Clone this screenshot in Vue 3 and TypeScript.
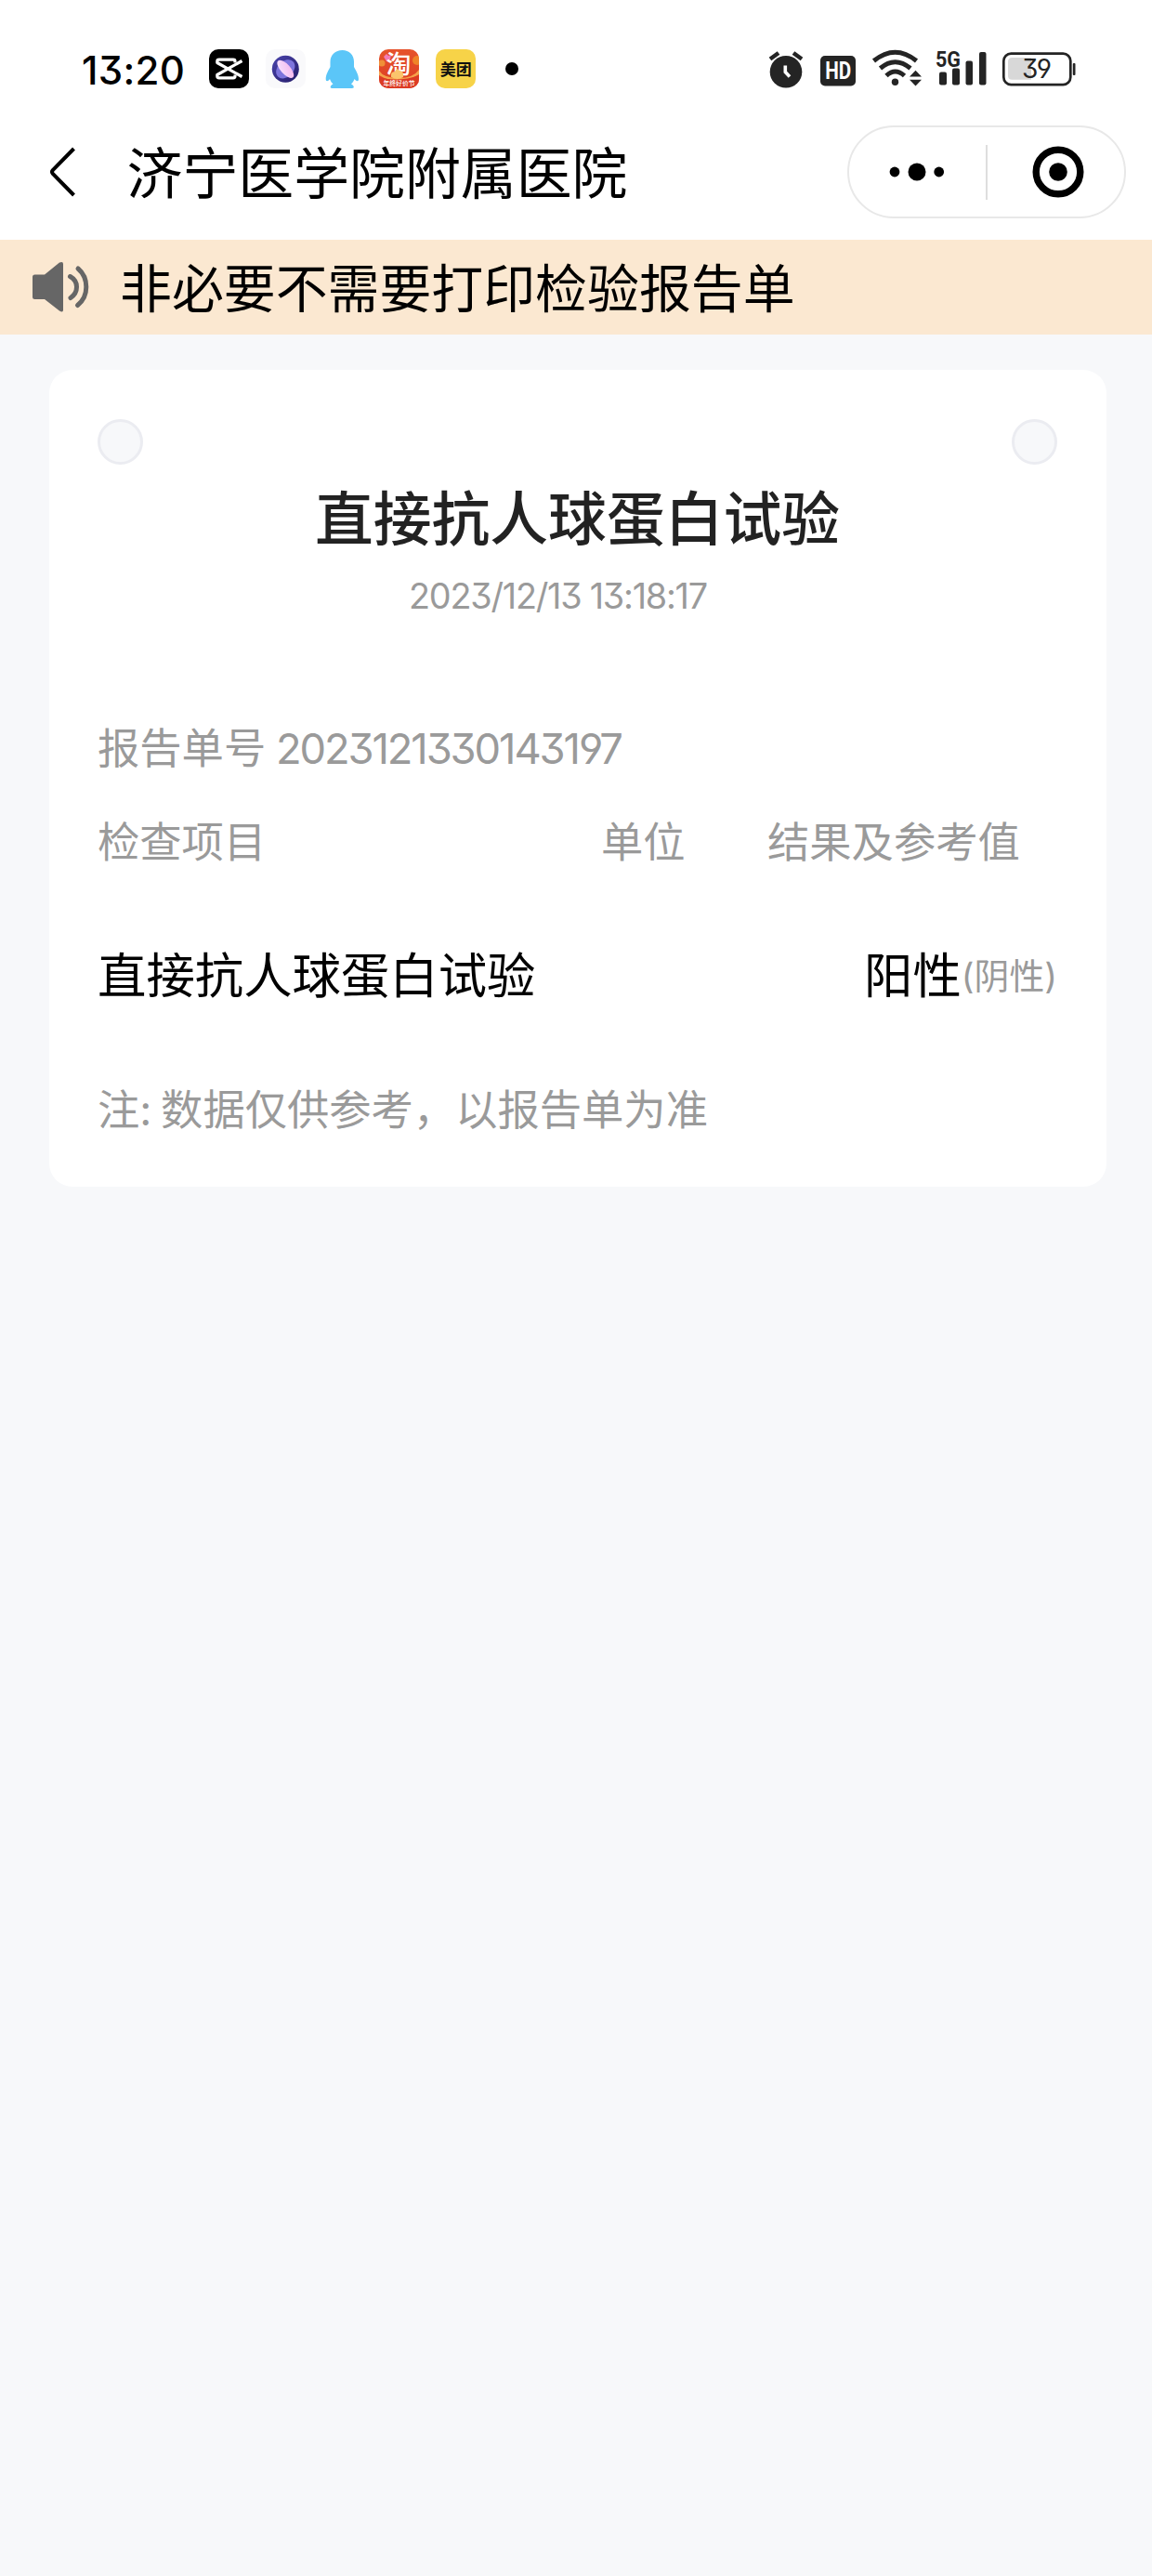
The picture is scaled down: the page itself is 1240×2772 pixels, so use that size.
<script setup lang="ts">
interface ResultRow {
  name: string
  value: string
  reference: string
}

const hospital = '济宁医学院附属医院'
const notice = '非必要不需要打印检验报告单'
const report = {
  title: '直接抗人球蛋白试验',
  time: '2023/12/13 13:18:17',
  number: '2023121330143197',
}
const rows: ResultRow[] = [{ name: '直接抗人球蛋白试验', value: '阳性', reference: '(阴性)' }]
</script>

<template>
  <div class="page">
    <header class="top">
      <div class="status">
        <span class="clock">13:20</span>
        <svg class="app-icons" width="350" height="60" viewBox="0 -8 350 60">
          <defs>
            <linearGradient id="orb" x1="0" y1="0" x2="1" y2="1">
              <stop offset="0" stop-color="#4b44ad" />
              <stop offset="1" stop-color="#241c68" />
            </linearGradient>
            <linearGradient id="petal" x1="0" y1="0" x2="1" y2="1">
              <stop offset="0" stop-color="#f6e4ff" />
              <stop offset="1" stop-color="#f5b4ec" />
            </linearGradient>
            <linearGradient id="tao" x1="0" y1="0" x2="0" y2="1">
              <stop offset="0" stop-color="#e6532c" />
              <stop offset="1" stop-color="#dc3c22" />
            </linearGradient>
            <clipPath id="taoClip"><rect x="183" y="1" width="43" height="42" rx="10" /></clipPath>
          </defs>

          <rect x="0" y="1" width="43" height="42" rx="10" fill="#000" />
          <g fill="none" stroke="#fff" stroke-width="3.2" stroke-linejoin="round">
            <path d="M28 15.500V14Q28 12.200 26 12.200H11Q8.800 12.200 8.800 14V15.500L35.500 30.500" />
            <path d="M28 28.500V30Q28 31.800 26 31.800H11Q8.800 31.800 8.800 30V28.500L35.500 13.500" />
          </g>

          <rect x="61" y="1" width="43" height="42" rx="10" fill="#f9f9fb" />
          <circle cx="82.300" cy="22.300" r="14.500" fill="url(#orb)" />
          <ellipse cx="82.300" cy="22.300" rx="8.500" ry="11.500" fill="#7d74dc" transform="rotate(45 82.300 22.300)" />
          <ellipse cx="82.300" cy="22.300" rx="5.200" ry="12" fill="url(#petal)" transform="rotate(-42 82.300 22.300)" />

          <path d="M143.500 2C151 2 156 7 156 14.500V20C158 24 161 28 161 33C161 36 159 36 156.500 33C155.500 35.500 154.500 37 153 38.500C156 40 157 43 154 43H132.500C129.500 43 130.500 40 133.500 38.500C132 37 131 35.500 130 33C128 36 125.700 36 125.700 33C125.700 28 128.500 24 130.500 20V14.500C130.500 7 136 2 143.500 2Z" fill="#5bc6f8" />

          <g clip-path="url(#taoClip)">
            <rect x="183" y="1" width="43" height="42" fill="url(#tao)" />
            <circle cx="224" cy="13" r="5" fill="#ef8428" />
            <circle cx="186" cy="16" r="3.500" fill="#f09038" />
            <path d="M188 9l3-3 2 2 3-1 -1 5 -4 2z" fill="#f37bb5" />
            <path d="M183 24Q188 32 204 32T226 23V28Q215 35 204 35T183 29Z" fill="#f5a14b" />
            <path d="M183 31Q204 37 226 29V43H183Z" fill="#dc3b24" />
          </g>
          <text x="190.500" y="27" class="glyph" font-size="27" font-weight="500" fill="#fff">淘</text>
          <path d="M196 31q-1-6 4-6q2-5 5-1q5 0 4 7q-6 4-13 0z" fill="#fbc56c" />
          <text x="187.500" y="40" class="glyph" font-size="6.800" font-weight="500" fill="#fff">年终好价节</text>

          <rect x="244" y="1" width="43" height="42" rx="10" fill="#f7d348" />
          <text x="248.800" y="28.500" class="glyph" font-size="17" font-weight="700" fill="#111">美团</text>
          <circle cx="326" cy="22" r="7" fill="#000" />
        </svg>

        <svg class="system-icons" width="336" height="60" viewBox="1 -8 336 60">
          <g fill="#242424">
            <circle cx="22" cy="25.300" r="17.300" />
            <path d="M5 11.500L14 5" stroke="#242424" stroke-width="4.500" />
            <path d="M39 11.500L30 5" stroke="#242424" stroke-width="4.500" />
            <path d="M21.300 18.500V25.500L26 30.500" fill="none" stroke="#fff" stroke-width="3.600" />

            <rect x="59" y="8" width="38" height="32.500" rx="5" />
            <text x="64.200" y="33.200" class="latin" font-size="25" font-weight="700" fill="#fff" textLength="28" lengthAdjust="spacingAndGlyphs">HD</text>

            <g fill="none" stroke="#242424" stroke-width="5">
              <path d="M116.500 13.500Q139.500-5 162.500 13.500" />
              <path d="M123.500 21.500Q139.500 8 156 21.500" />
              <path d="M130 29.500Q139.500 20.500 149.500 29.500" />
            </g>
            <circle cx="139.500" cy="36.300" r="3.700" />
            <path d="M155 30.500L161.500 23.700L168 30.500Z" />
            <path d="M155 33.800L161.500 40.600L168 33.800Z" />

            <text x="183" y="19.800" class="latin" font-size="24" font-weight="700" textLength="27" lengthAdjust="spacingAndGlyphs">5G</text>
            <rect x="187" y="25.500" width="8" height="14" rx="2" />
            <rect x="201" y="21.500" width="8" height="18" rx="2" />
            <rect x="215.500" y="13.500" width="7.500" height="26" rx="2" />
            <rect x="230" y="4" width="7.500" height="35.500" rx="2" />
          </g>
          <rect x="256.300" y="5.600" width="72" height="33.500" rx="8" fill="none" stroke="#242424" stroke-width="2.700" />
          <path d="M265.500 10H286V33.800H265.500Q261 33.800 261 29.500V14.500Q261 10 265.500 10Z" fill="#d8d8d8" />
          <rect x="330.800" y="16" width="2.700" height="13" rx="1" fill="#242424" />
          <text x="276" y="32" class="latin digits" font-size="28" fill="#242424" textLength="32">39</text>
        </svg>
      </div>

      <div class="nav">
        <svg class="back" width="30" height="56" viewBox="0 0 30 56">
          <path d="M27.500 3L4.800 26.200Q3.200 28 4.800 29.800L27.500 53" fill="none" stroke="#000" stroke-width="4" />
        </svg>
        <h1 class="hospital">{{ hospital }}</h1>
        <div class="capsule">
          <svg width="147" height="96" viewBox="0 0 147 96">
            <circle cx="49" cy="48" r="5.400" />
            <circle cx="73" cy="48" r="9.500" />
            <circle cx="96.700" cy="48" r="5.400" />
          </svg>
          <i class="divider"></i>
          <svg width="147" height="96" viewBox="0 0 147 96">
            <circle cx="76" cy="48" r="23.800" fill="none" stroke="#000" stroke-width="7.400" />
            <circle cx="76" cy="48" r="9.800" />
          </svg>
        </div>
      </div>
    </header>

    <section class="notice">
      <svg class="speaker" width="62" height="56" viewBox="0 0 62 56">
        <path d="M2.500 14.500H13L29 1.600Q33 0 33 3V52.500Q33 56 29 53.500L13 41H2.500Q0 41 0 38.500V17Q0 14.500 2.500 14.500Z" fill="#666" />
        <path d="M40.500 16.500Q47.500 20.500 47.500 27.800T41 39.500" fill="none" stroke="#666" stroke-width="5" stroke-linecap="round" />
        <path d="M49 8Q57.800 15.500 57.800 27.800T48.500 47.500" fill="none" stroke="#666" stroke-width="5" stroke-linecap="round" />
      </svg>
      <span>{{ notice }}</span>
    </section>

    <main class="card">
      <div class="holes"><i></i><i></i></div>
      <h2 class="title">{{ report.title }}</h2>
      <p class="time">{{ report.time }}</p>
      <p class="number">报告单号 <span>{{ report.number }}</span></p>
      <div class="columns">
        <span class="col-name">检查项目</span>
        <span class="col-unit">单位</span>
        <span>结果及参考值</span>
      </div>
      <div v-for="row in rows" :key="row.name" class="row">
        <span>{{ row.name }}</span>
        <span class="value">{{ row.value }}<small>{{ row.reference }}</small></span>
      </div>
      <p class="note">注: 数据仅供参考，以报告单为准</p>
    </main>
  </div>
</template>

<style>
body {
  background: #f7f8fa;
}
</style>

<style scoped>
.page {
  width: 1240px;
  min-height: 2772px;
  background: #f7f8fa;
  color: #000;
  font-family: Inter, 'Noto Sans CJK SC', sans-serif;
  font-feature-settings: 'cv09', 'cv04';
  white-space: nowrap;
}
h1, h2, p {
  margin: 0;
  font-weight: 400;
}
svg {
  display: block;
  flex: none;
  overflow: visible;
}
.glyph {
  font-family: 'Noto Sans CJK SC', sans-serif;
}
.latin {
  font-family: Roboto, sans-serif;
}
.latin.digits {
  font-family: Inter, sans-serif;
}
.top {
  height: 258px;
  background: #fff;
}
.status {
  display: flex;
  align-items: center;
  height: 122px;
  padding: 26px 79px 0 88px;
  box-sizing: border-box;
}
.clock {
  width: 137px;
  padding-top: 3px;
  font-size: 42px;
  font-weight: 500;
  line-height: 44px;
  letter-spacing: 0.3px;
}
.system-icons {
  margin-left: auto;
}
.nav {
  display: flex;
  align-items: center;
  height: 126px;
  padding: 0 28px 0 52px;
}
.hospital {
  flex: 1;
  margin-left: 54.5px;
  padding-top: 4px;
  font-size: 59.9px;
  line-height: 80px;
}
.capsule {
  display: flex;
  align-items: center;
  width: 300px;
  height: 100px;
  box-sizing: border-box;
  border: 2px solid #e8e8e8;
  border-radius: 50px;
}
.divider {
  width: 2px;
  height: 59px;
  background: #dedede;
}
.notice {
  display: flex;
  align-items: center;
  height: 102px;
  padding-left: 35px;
  background: #fbe8d1;
  font-size: 55.9px;
  line-height: 80px;
}
.notice span {
  margin-left: 32px;
  padding-top: 4px;
}
.card {
  width: 1138px;
  height: 879px;
  margin: 38px 0 0 53px;
  padding: 53px 53px 0 52px;
  box-sizing: border-box;
  background: #fff;
  border-radius: 25px;
}
.holes {
  display: flex;
  justify-content: space-between;
}
.holes i {
  width: 49px;
  height: 49px;
  box-sizing: border-box;
  border: 3px solid #ebecf1;
  border-radius: 50%;
  background: #f7f8fa;
}
.title {
  margin-top: 18px;
  font-size: 62.8px;
  font-weight: 500;
  line-height: 80px;
  text-align: center;
  color: #222;
}
.time {
  margin: 18px 0 0 335px;
  font-size: 37.8px;
  line-height: 50px;
  letter-spacing: -1.25px;
  color: #9a9a9a;
}
.number {
  margin-top: 110px;
  font-size: 45.3px;
  line-height: 60px;
  color: #9a9a9a;
}
.number span {
  margin-left: -2px;
  letter-spacing: -2.1px;
}
.columns {
  display: flex;
  margin-top: 41px;
  font-size: 45.3px;
  line-height: 60px;
  color: #9a9a9a;
}
.col-name {
  width: 542px;
}
.col-unit {
  width: 179px;
}
.row {
  display: flex;
  justify-content: space-between;
  margin-top: 78px;
  font-size: 52.4px;
  line-height: 70px;
}
.value {
  display: flex;
  align-items: center;
}
.value small {
  font-size: 37.8px;
  color: #9a9a9a;
}
.note {
  margin-top: 80px;
  font-size: 45.3px;
  line-height: 60px;
  word-spacing: -3px;
  color: #9a9a9a;
}
</style>
